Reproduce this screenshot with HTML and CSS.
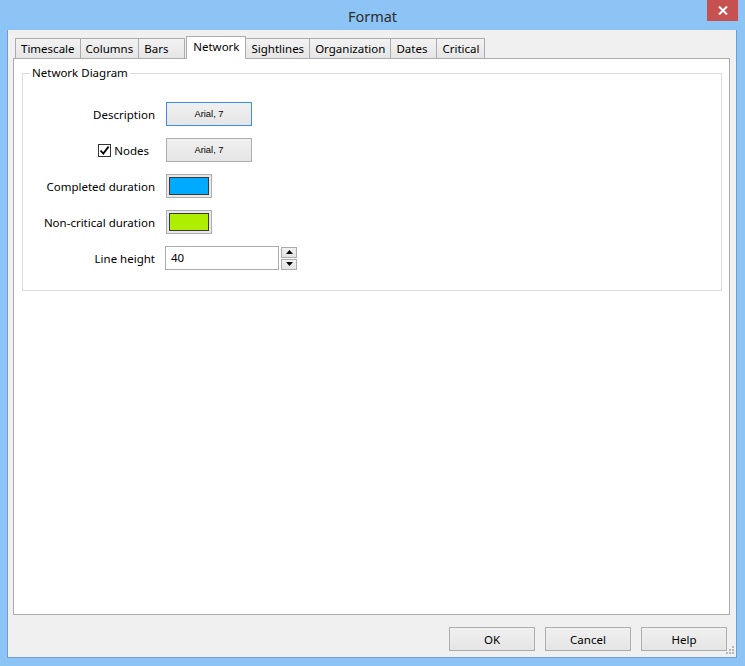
FILE: index.html
```html
<!DOCTYPE html>
<html>
<head>
<meta charset="utf-8">
<title>Format</title>
<link rel="stylesheet" href="styles.css">
</head>
<body>
<div class="window">
  <div class="titlebar">
    <span class="title">Format</span>
    <div class="close"><svg width="10" height="9" viewBox="0 0 10 9"><path d="M1 0.5 L9 8.5 M9 0.5 L1 8.5" stroke="#fff" stroke-width="2"/></svg></div>
  </div>
  <div class="client">
    <div class="tabs">
      <div class="tab">Timescale</div>
      <div class="tab">Columns</div>
      <div class="tab">Bars</div>
      <div class="tab active">Network</div>
      <div class="tab">Sightlines</div>
      <div class="tab">Organization</div>
      <div class="tab">Dates</div>
      <div class="tab">Critical</div>
    </div>
    <div class="page">
      <fieldset class="group">
        <legend>Network Diagram</legend>
        <div class="form">
          <div class="lbl">Description</div>
          <div class="cell"><div class="fontbtn focus">Arial, 7</div></div>

          <div class="lbl lbl-check"><span class="check"><svg width="11" height="11" viewBox="0 0 11 11"><path d="M1.5 5.5 L4.3 8.6 L9.6 1.6" stroke="#000" stroke-width="1.8" fill="none"/></svg></span>Nodes</div>
          <div class="cell"><div class="fontbtn">Arial, 7</div></div>

          <div class="lbl">Completed duration</div>
          <div class="cell"><div class="swatch"><span class="swatch-fill blue"></span></div></div>

          <div class="lbl">Non-critical duration</div>
          <div class="cell"><div class="swatch"><span class="swatch-fill green"></span></div></div>

          <div class="lbl">Line height</div>
          <div class="cell">
            <div class="edit">40</div>
            <div class="spin">
              <div class="spin-btn"><svg width="7" height="4" viewBox="0 0 7 4"><path d="M0 4 L3.5 0 L7 4 Z" fill="#000"/></svg></div>
              <div class="spin-btn"><svg width="7" height="4" viewBox="0 0 7 4"><path d="M0 0 L3.5 4 L7 0 Z" fill="#000"/></svg></div>
            </div>
          </div>
        </div>
      </fieldset>
    </div>
    <div class="footer">
      <div class="btn">OK</div>
      <div class="btn">Cancel</div>
      <div class="btn">Help</div>
    </div>
    <div class="grip"><svg width="8" height="8" viewBox="0 0 8 8" fill="#b8b8b8"><rect x="6" y="0" width="2" height="2"/><rect x="3" y="3" width="2" height="2"/><rect x="6" y="3" width="2" height="2"/><rect x="0" y="6" width="2" height="2"/><rect x="3" y="6" width="2" height="2"/><rect x="6" y="6" width="2" height="2"/></svg></div>
  </div>
</div>
</body>
</html>
```

FILE: styles.css
```css
/* Format dialog, Windows 8 look */

body
{ margin: 0;
  font-family: "Noto Sans", "Open Sans", sans-serif;
  font-size: 11.5px;
  color: #000;
}

div.window
{ width: 745px;
  height: 666px;
  background-color: #8cc4f6;
  display: flex;
  flex-direction: column;
  position: relative;
}

div.titlebar
{ height: 30px;
  flex: none;
  display: flex;
  align-items: center;
  justify-content: center;
}

span.title
{ font-size: 14.5px;
  color: #2e2e2e;
  margin-top: 1px;
}

div.close
{ position: absolute;
  top: 0;
  right: 7px;
  width: 31px;
  height: 21px;
  background-color: #c75050;
  display: flex;
  align-items: center;
  justify-content: center;
}

div.client
{ flex: 1;
  margin: 0 8px 8px 7px;
  background-color: #f0f0f0;
  border: 1px solid #6d9fd0;
  border-top: 0;
  padding: 6px 6px 0 5px;
  display: flex;
  flex-direction: column;
  position: relative;
}

/* Tabs */

div.tabs
{ display: flex;
  align-items: flex-end;
  height: 22px;
  padding-left: 2px;
  position: relative;
  z-index: 1;
}

div.tab
{ box-sizing: border-box;
  height: 20px;
  min-width: 46px;
  padding: 0 5px;
  line-height: 19px;
  border: 1px solid #acacac;
  border-bottom: 0;
  border-left-width: 0;
  background: linear-gradient(#f2f2f2, #e6e6e6);
  white-space: nowrap;
}

div.tab:first-child
{ border-left-width: 1px;
}

div.tab.active
{ height: 23px;
  margin-bottom: -1px;
  margin-left: 1px;
  border-left-width: 1px;
  padding: 0 6px;
  line-height: 20px;
  background: #fff;
}

div.tab.active + div.tab
{ border-left-width: 0;
}

div.page
{ height: 557px;
  box-sizing: border-box;
  background-color: #fff;
  border: 1px solid #acacac;
  padding: 6px 7px 0 8px;
}

/* Group box */

fieldset.group
{ margin: 0;
  padding: 0 0 20px 0;
  border: 1px solid #dcdcdc;
}

fieldset.group legend
{ margin-left: 7px;
  padding: 0 2px;
  line-height: 16px;
}

div.form
{ display: grid;
  grid-template-columns: 132px 1fr;
  column-gap: 10px;
  row-gap: 12px;
  padding-top: 21px;
}

div.lbl
{ height: 24px;
  display: flex;
  align-items: center;
  justify-content: flex-end;
  white-space: nowrap;
}

div.lbl-check
{ padding-right: 6px;
}

span.check
{ width: 11px;
  height: 11px;
  border: 1px solid #333;
  background: #fff;
  margin-right: 3px;
  display: flex;
}

div.cell
{ height: 24px;
  display: flex;
  align-items: center;
}

div.fontbtn
{ box-sizing: border-box;
  width: 86px;
  height: 24px;
  margin-left: 1px;
  border: 1px solid #adadad;
  background: linear-gradient(#f0f0f0, #e5e5e5);
  font-family: "Liberation Sans", Arial, sans-serif;
  font-size: 7pt;
  display: flex;
  align-items: center;
  justify-content: center;
}

div.fontbtn.focus
{ border-color: #3c8fe6;
}

div.swatch
{ box-sizing: border-box;
  width: 46px;
  height: 24px;
  margin-left: 1px;
  border: 1px solid #adadad;
  background: #e8e8e8;
  padding: 2px;
  display: flex;
}

span.swatch-fill
{ flex: 1;
  border: 1px solid #3a3a3a;
}

span.blue { background-color: #00aaff; }
span.green { background-color: #aeee00; }

div.edit
{ box-sizing: border-box;
  width: 114px;
  height: 24px;
  border: 1px solid #ababab;
  background: #fff;
  padding-left: 5px;
  line-height: 22px;
}

div.spin
{ display: flex;
  flex-direction: column;
  gap: 1px;
  margin-left: 2px;
}

div.spin-btn
{ box-sizing: border-box;
  width: 16px;
  height: 11px;
  border: 1px solid #acacac;
  background: linear-gradient(#f2f2f2, #e3e3e3);
  display: flex;
  align-items: center;
  justify-content: center;
}

/* Bottom buttons */

div.footer
{ display: flex;
  justify-content: flex-end;
  gap: 10px;
  padding: 12px 3px 0 0;
}

div.btn
{ box-sizing: border-box;
  width: 86px;
  height: 24px;
  border: 1px solid #adadad;
  background: linear-gradient(#f0f0f0, #e5e5e5);
  display: flex;
  align-items: center;
  justify-content: center;
}

div.grip
{ position: absolute;
  right: 2px;
  bottom: 3px;
  display: flex;
}
```
